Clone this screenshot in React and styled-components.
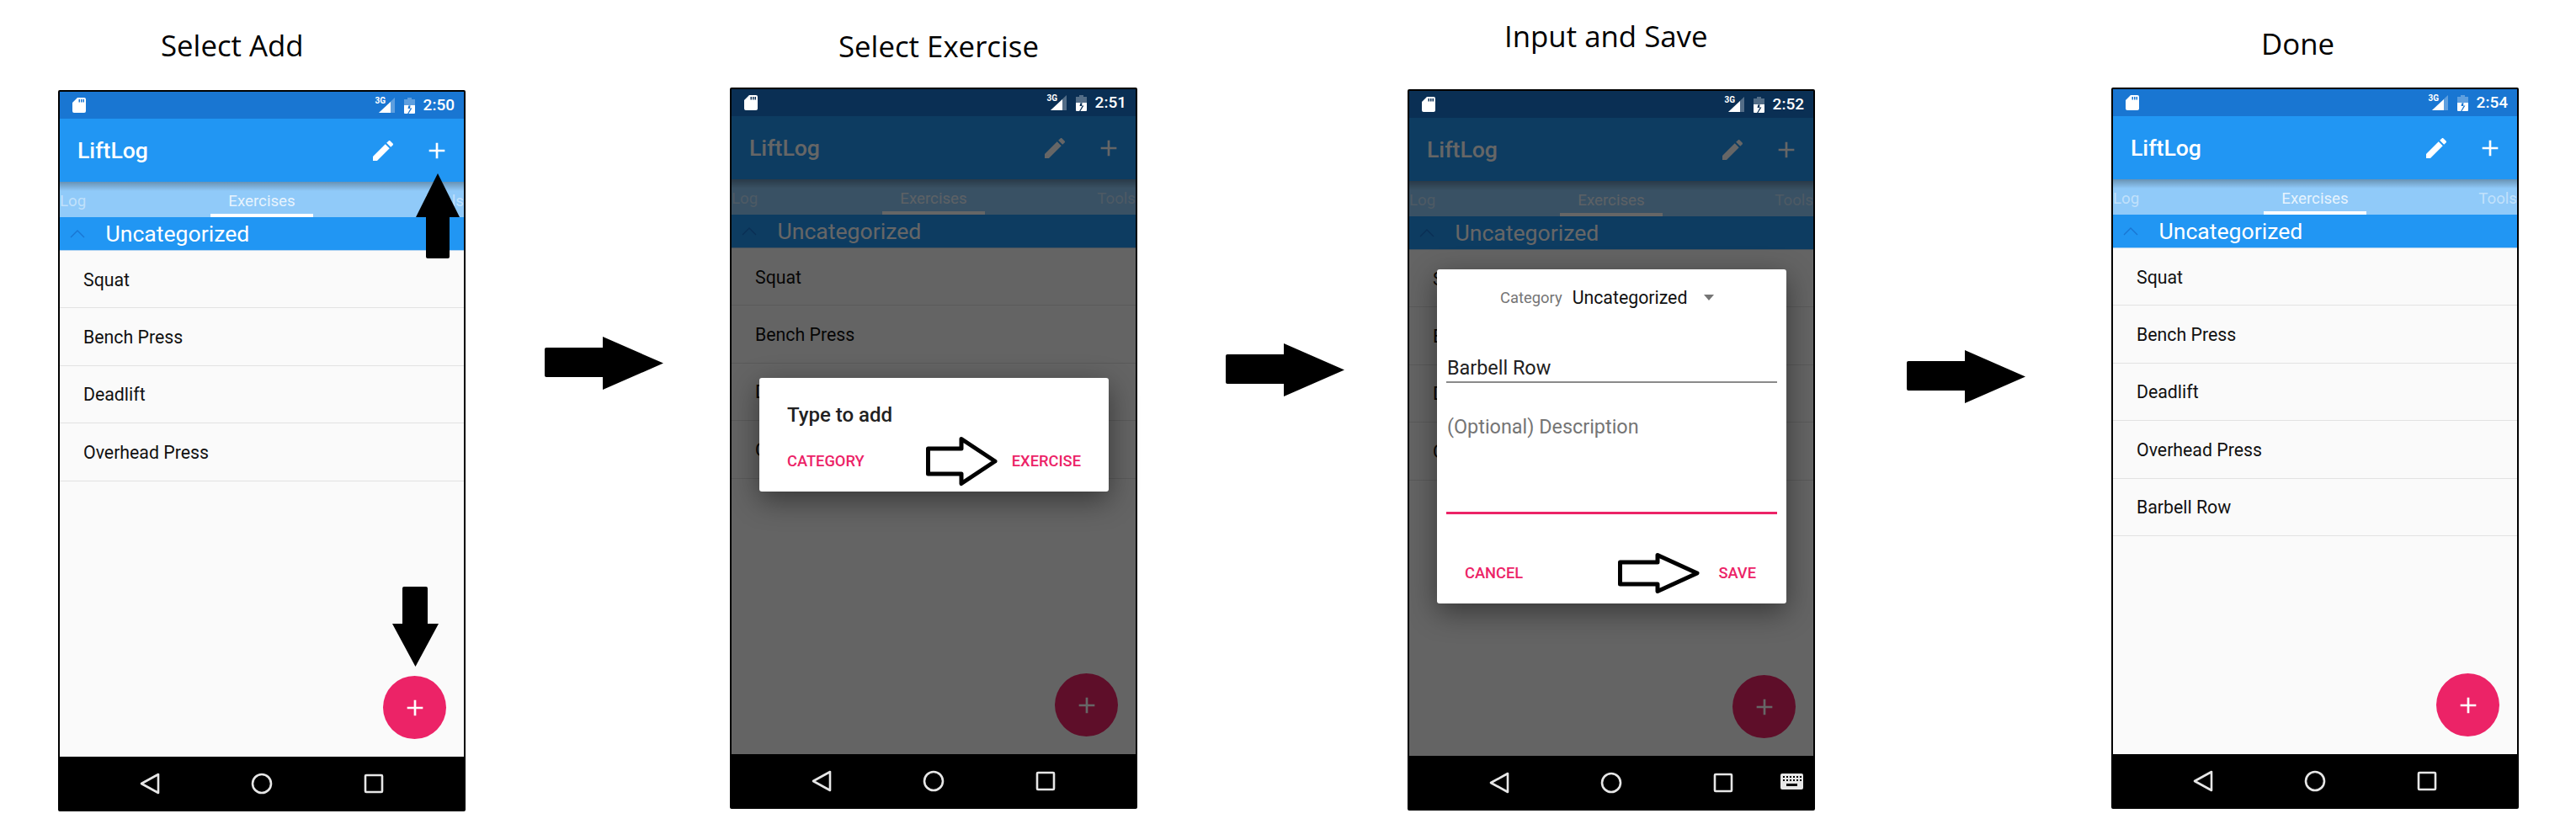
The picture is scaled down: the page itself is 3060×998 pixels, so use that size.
import React from 'react';
import styled, { createGlobalStyle } from 'styled-components';

const GlobalStyle = createGlobalStyle`
  html, body {
    margin: 0;
    padding: 0;
    background: #fff;
  }
  * {
    box-sizing: border-box;
  }
`;

const Page = styled.div`
  display: flex;
  align-items: flex-start;
  width: 3060px;
  height: 998px;
  padding-left: 69px;
  overflow: hidden;
  background: #fff;
  font-family: Roboto, sans-serif;
`;

const Step = styled.section`
  display: flex;
  flex-direction: column;
  flex: none;
  width: 484px;
`;

const StepTitle = styled.h2`
  height: 46px;
  margin: ${(p) => p.$top}px 0 ${(p) => p.$gap}px ${(p) => p.$left}px;
  font-family: 'Open Sans', sans-serif;
  font-size: 34.8px;
  font-weight: 400;
  line-height: 46px;
  color: #000;
  white-space: nowrap;
`;

const Phone = styled.div`
  position: relative;
  display: flex;
  flex-direction: column;
  height: 857px;
  border: 2px solid #000;
  border-radius: 2px;
  background: #fafafa;
`;

const StatusBar = styled.div`
  display: flex;
  flex: none;
  align-items: center;
  justify-content: space-between;
  height: 32px;
  padding: 0 11px 0 15px;
  background: ${(p) => (p.$dim ? '#0a2f54' : '#1976d2')};
  color: #fff;
`;

const StatusRight = styled.div`
  display: flex;
  align-items: center;
`;

const Signal = styled.div`
  position: relative;
  width: 23px;
  height: 18px;
  margin-right: 11px;
  svg {
    position: absolute;
    right: 0;
    top: 0;
  }
`;

const NetLabel = styled.span`
  position: absolute;
  left: 0;
  top: -1px;
  font-size: 10px;
  font-weight: 700;
  line-height: 10px;
  color: #fff;
`;

const Clock = styled.span`
  margin-left: 10px;
  font-size: 19px;
  font-weight: 500;
  line-height: 22px;
`;

const Body = styled.div`
  position: relative;
  display: flex;
  flex: 1;
  flex-direction: column;
  min-height: 0;
`;

const AppBar = styled.header`
  display: flex;
  flex: none;
  align-items: center;
  height: 75px;
  padding: 0 16px 0 21px;
  background: #2196f3;
  color: #fff;
`;

const AppTitle = styled.h1`
  flex: 1;
  margin: 0;
  font-size: 26.6px;
  font-weight: 500;
  line-height: 32px;
`;

const Actions = styled.div`
  display: flex;
  gap: 32px;
`;

const TabBar = styled.div`
  display: grid;
  flex: none;
  grid-template-columns: 1fr 122px 1fr;
  height: 42px;
  background: linear-gradient(rgba(0, 0, 0, 0.28), rgba(0, 0, 0, 0) 11px), #90caf9;
  overflow: hidden;
`;

const Tab = styled.div`
  height: 42px;
  padding-top: 11px;
  font-size: 18.7px;
  line-height: 24px;
  text-align: ${(p) => p.$align || 'center'};
  color: ${(p) => (p.$active ? 'rgba(255,255,255,0.8)' : 'rgba(255,255,255,0.45)')};
  border-bottom: 4px solid ${(p) => (p.$active ? '#fff' : 'transparent')};
`;

const CategoryHeader = styled.div`
  display: flex;
  flex: none;
  align-items: center;
  height: 40px;
  padding-left: 12px;
  border-bottom: 1px solid rgba(210, 225, 240, 0.8);
  background: #2196f3;
  color: #fff;
  font-size: 26.6px;
  line-height: 32px;
`;

const CategoryName = styled.span`
  margin-left: 24.5px;
`;

const List = styled.ul`
  flex: 1;
  margin: 0;
  padding: 0;
  list-style: none;
`;

const Row = styled.li`
  display: flex;
  align-items: center;
  height: 68.4px;
  padding: 1px 0 0 28px;
  border-bottom: 1px solid #e2e2e2;
  font-size: 21.3px;
  color: #111;
`;

const Fab = styled.div`
  position: absolute;
  right: 21px;
  bottom: 21px;
  display: flex;
  align-items: center;
  justify-content: center;
  width: 75px;
  height: 75px;
  border-radius: 50%;
  background: #ec2367;
`;

const NavBar = styled.nav`
  position: relative;
  display: flex;
  flex: none;
  align-items: center;
  justify-content: center;
  gap: 108px;
  height: 63px;
  background: #000;
`;

const KeyboardSlot = styled.div`
  position: absolute;
  right: 12px;
  top: 21px;
  display: flex;
`;

const Overlay = styled.div`
  position: absolute;
  inset: 0;
  background: rgba(0, 0, 0, 0.6);
`;

const Dialog = styled.div`
  position: absolute;
  left: 33px;
  top: ${(p) => p.$top}px;
  width: 415px;
  height: ${(p) => p.$height}px;
  border-radius: 3px;
  background: #fff;
  box-shadow: 0 10px 34px rgba(0, 0, 0, 0.45);
`;

const DialogTitle = styled.div`
  padding: 30px 33px 0;
  font-size: 24px;
  font-weight: 500;
  line-height: 28px;
  color: #212121;
`;

const DialogActions = styled.div`
  display: flex;
  justify-content: space-between;
  margin-top: ${(p) => p.$top}px;
  padding: 0 ${(p) => p.$right}px 0 33px;
`;

const TextButton = styled.span`
  font-size: 18.3px;
  font-weight: 500;
  line-height: 20px;
  color: #ec2367;
`;

const CategoryPicker = styled.div`
  display: flex;
  align-items: center;
  height: 66px;
  padding-left: 75px;
`;

const PickerLabel = styled.span`
  font-size: 18.4px;
  color: #757575;
`;

const PickerValue = styled.span`
  margin-left: 12px;
  font-size: 21.3px;
  color: #111;
`;

const Caret = styled.span`
  width: 0;
  height: 0;
  margin-left: 20px;
  border-top: 7px solid #757575;
  border-left: 6.5px solid transparent;
  border-right: 6.5px solid transparent;
`;

const Field = styled.div`
  height: ${(p) => p.$height}px;
  padding: ${(p) => p.$pad}px 1px 0;
  margin: 0 11px;
  border-bottom: ${(p) => p.$line};
  font-size: 23.4px;
  line-height: 28px;
  color: ${(p) => p.$color};
`;

const FloatingSvg = styled.svg`
  position: absolute;
  left: ${(p) => p.$left}px;
  top: ${(p) => p.$top}px;
  display: block;
`;

const FlowArrow = styled.svg`
  flex: none;
  display: block;
  margin: ${(p) => p.$top}px ${(p) => p.$right}px 0 ${(p) => p.$left}px;
`;

const PlusIcon = ({ size = 32, color = '#fff' }) => (
  <svg width={size} height={size} viewBox="0 0 24 24" fill={color}>
    <path d="M19 13h-6v6h-2v-6H5v-2h6V5h2v6h6v2z" />
  </svg>
);

const PencilIcon = () => (
  <svg width="32" height="32" viewBox="0 0 24 24" fill="#fff">
    <path d="M3 17.25V21h3.75L17.81 9.94l-3.75-3.75L3 17.25zM20.71 7.04c.39-.39.39-1.02 0-1.41l-2.34-2.34c-.39-.39-1.02-.39-1.41 0l-1.83 1.83 3.75 3.75 1.83-1.83z" />
  </svg>
);

const SdIcon = () => (
  <svg width="16" height="18" viewBox="0 0 16 18" fill="#fff">
    <path
      fillRule="evenodd"
      d="M6 0h8a2 2 0 0 1 2 2v14a2 2 0 0 1-2 2H2a2 2 0 0 1-2-2V6zM7.5 2v3.4H9V2zM10 2v3.4h1.5V2zM12.5 2v3.4H14V2z"
    />
  </svg>
);

const SignalIcon = () => (
  <svg width="19" height="18" viewBox="0 0 19 18" fill="#fff">
    <path d="M19 0v18H0z" opacity="0.3" />
    <path d="M14 5v13H0z" />
  </svg>
);

const BatteryIcon = () => (
  <svg width="13" height="19" viewBox="0 0 13 19" fill="#fff">
    <path d="M4 0h5v2h4v8H0V2h4z" opacity="0.3" />
    <path fillRule="evenodd" d="M0 9h5.5l-1 4h3l-3.4 6H1a1 1 0 0 1-1-1zM7.6 9H13v9a1 1 0 0 1-1 1H5.4l4-6.6H7z" />
  </svg>
);

const BackIcon = () => (
  <svg width="24" height="26" viewBox="0 0 24 26" fill="none" stroke="#e6e6e6" strokeWidth="2.6" strokeLinejoin="round">
    <path d="M22 2v22L2 13z" />
  </svg>
);

const HomeIcon = () => (
  <svg width="26" height="26" viewBox="0 0 26 26" fill="none" stroke="#e6e6e6" strokeWidth="2.6">
    <circle cx="13" cy="13" r="11" />
  </svg>
);

const RecentIcon = () => (
  <svg width="24" height="24" viewBox="0 0 24 24" fill="none" stroke="#e6e6e6" strokeWidth="2.6" strokeLinejoin="round">
    <rect x="2" y="2" width="20" height="20" rx="1" />
  </svg>
);

const KeyboardIcon = () => (
  <svg width="27" height="19" viewBox="0 0 27 19">
    <rect width="27" height="19" rx="2" fill="#e6e6e6" />
    <path
      fill="#000"
      d="M3 3h2v2H3zM7 3h2v2H7zM11 3h2v2h-2zM15 3h2v2h-2zM19 3h2v2h-2zM23 3h2v2h-2zM3 7h2v2H3zM7 7h2v2H7zM11 7h2v2h-2zM15 7h2v2h-2zM19 7h2v2h-2zM23 7h2v2h-2zM7 12h13v3H7z"
    />
  </svg>
);

const ChevronIcon = () => (
  <svg width="18" height="10" viewBox="0 0 18 10" fill="none" stroke="#1976d2" strokeWidth="1.4">
    <path d="M1 9l8-8 8 8" />
  </svg>
);

const BlackArrow = (props) => (
  <FlowArrow width="141" height="63" viewBox="0 0 141 63" {...props}>
    <path d="M2 13h67V0l72 31.5L69 63V48H2a2 2 0 0 1-2-2V15a2 2 0 0 1 2-2z" fill="#000" />
  </FlowArrow>
);

const HollowArrow = ({ w, h, head, inset, left, top }) => (
  <FloatingSvg width={w} height={h} viewBox={`0 0 ${w} ${h}`} $left={left} $top={top}>
    <path
      d={`M2.5 ${inset}H${head}V3.5L${w - 4} ${h / 2}L${head} ${h - 3.5}V${h - inset}H2.5Z`}
      fill="#fff"
      stroke="#000"
      strokeWidth="5"
      strokeLinejoin="round"
    />
  </FloatingSvg>
);

const BASE_ITEMS = ['Squat', 'Bench Press', 'Deadlift', 'Overhead Press'];

const PhoneScreen = ({ time, dim, items = BASE_ITEMS, keyboard, dialog, children }) => (
  <Phone>
    <StatusBar $dim={dim}>
      <SdIcon />
      <StatusRight>
        <Signal>
          <NetLabel>3G</NetLabel>
          <SignalIcon />
        </Signal>
        <BatteryIcon />
        <Clock>{time}</Clock>
      </StatusRight>
    </StatusBar>
    <Body>
      <AppBar>
        <AppTitle>LiftLog</AppTitle>
        <Actions>
          <PencilIcon />
          <PlusIcon />
        </Actions>
      </AppBar>
      <TabBar>
        <Tab $align="left">Log</Tab>
        <Tab $active>Exercises</Tab>
        <Tab $align="right">Tools</Tab>
      </TabBar>
      <CategoryHeader>
        <ChevronIcon />
        <CategoryName>Uncategorized</CategoryName>
      </CategoryHeader>
      <List>
        {items.map((item) => (
          <Row key={item}>{item}</Row>
        ))}
      </List>
      <Fab>
        <PlusIcon size={32} />
      </Fab>
      {dim && <Overlay />}
      {dialog}
    </Body>
    <NavBar>
      <BackIcon />
      <HomeIcon />
      <RecentIcon />
      {keyboard && (
        <KeyboardSlot>
          <KeyboardIcon />
        </KeyboardSlot>
      )}
    </NavBar>
    {children}
  </Phone>
);

const App = () => (
  <Page>
    <GlobalStyle />

    <Step>
      <StepTitle $left={122} $top={31} $gap={30}>Select Add</StepTitle>
      <PhoneScreen time="2:50">
        <FloatingSvg width="52" height="101" viewBox="0 0 52 101" $left={423} $top={97}>
          <path d="M26 0l26 52H40v47a2 2 0 0 1-2 2H14a2 2 0 0 1-2-2V52H0z" fill="#000" />
        </FloatingSvg>
        <FloatingSvg width="55" height="95" viewBox="0 0 55 95" $left={395} $top={588}>
          <path d="M14 0h26a2 2 0 0 1 2 2v42h13L27.5 95 0 44h12V2a2 2 0 0 1 2-2z" fill="#000" />
        </FloatingSvg>
      </PhoneScreen>
    </Step>
    <BlackArrow $left={94} $right={79} $top={400} />

    <Step>
      <StepTitle $left={129} $top={32} $gap={26}>Select Exercise</StepTitle>
      <PhoneScreen
        time="2:51"
        dim
        dialog={
          <Dialog $top={311} $height={135}>
            <DialogTitle>Type to add</DialogTitle>
            <DialogActions $top={31} $right={33}>
              <TextButton>CATEGORY</TextButton>
              <TextButton>EXERCISE</TextButton>
            </DialogActions>
            <HollowArrow w={86} h={60} head={42} inset={15} left={198} top={69} />
          </Dialog>
        }
      />
    </Step>
    <BlackArrow $left={105} $right={75} $top={408} />

    <Step>
      <StepTitle $left={115} $top={20} $gap={40}>Input and Save</StepTitle>
      <PhoneScreen
        time="2:52"
        dim
        keyboard
        dialog={
          <Dialog $top={180} $height={397}>
            <CategoryPicker>
              <PickerLabel>Category</PickerLabel>
              <PickerValue>Uncategorized</PickerValue>
              <Caret />
            </CategoryPicker>
            <Field $height={69} $pad={37} $line="2px solid #8a8a8a" $color="#212121">
              Barbell Row
            </Field>
            <Field $height={156} $pad={38} $line="3px solid #ec2367" $color="#757575">
              (Optional) Description
            </Field>
            <DialogActions $top={60} $right={36}>
              <TextButton>CANCEL</TextButton>
              <TextButton>SAVE</TextButton>
            </DialogActions>
            <HollowArrow w={98} h={50} head={47} inset={12} left={215} top={336} />
          </Dialog>
        }
      />
    </Step>
    <BlackArrow $left={109} $right={102} $top={416} />

    <Step>
      <StepTitle $left={178} $top={29} $gap={29}>Done</StepTitle>
      <PhoneScreen time="2:54" items={[...BASE_ITEMS, 'Barbell Row']} />
    </Step>
  </Page>
);

export default App;
